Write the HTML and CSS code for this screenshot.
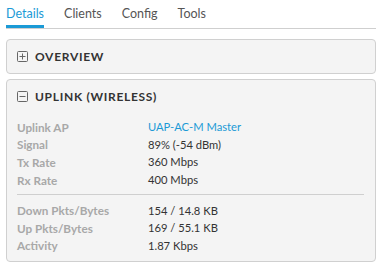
FILE: index.html
```html
<!DOCTYPE html>
<html>
<head>
<meta charset="utf-8">
<link rel="stylesheet" href="styles.css">
</head>
<body>
<div class="panel">
  <nav class="tabs">
    <span class="tab active">Details</span>
    <span class="tab">Clients</span>
    <span class="tab">Config</span>
    <span class="tab">Tools</span>
  </nav>
  <section class="box">
    <div class="box-head">
      <svg class="toggle" width="11" height="11" viewBox="0 0 11 11"><rect x="0.5" y="0.5" width="10" height="10" rx="1" fill="none" stroke="#666"/><path d="M2.5 5.5h6M5.5 2.5v6" stroke="#666" stroke-width="1"/></svg>
      <span class="box-title">OVERVIEW</span>
    </div>
  </section>
  <section class="box">
    <div class="box-head">
      <svg class="toggle" width="11" height="11" viewBox="0 0 11 11"><rect x="0.5" y="0.5" width="10" height="10" rx="1" fill="none" stroke="#666"/><path d="M2.5 5.5h6" stroke="#666" stroke-width="1"/></svg>
      <span class="box-title">UPLINK (WIRELESS)</span>
    </div>
    <div class="box-body">
      <div class="row"><span class="label">Uplink AP</span><span class="value link">UAP-AC-M Master</span></div>
      <div class="row"><span class="label">Signal</span><span class="value">89% (-54 dBm)</span></div>
      <div class="row"><span class="label">Tx Rate</span><span class="value">360 Mbps</span></div>
      <div class="row"><span class="label">Rx Rate</span><span class="value">400 Mbps</span></div>
      <hr class="sep">
      <div class="row"><span class="label">Down Pkts/Bytes</span><span class="value">154 / 14.8 KB</span></div>
      <div class="row"><span class="label">Up Pkts/Bytes</span><span class="value">169 / 55.1 KB</span></div>
      <div class="row"><span class="label">Activity</span><span class="value">1.87 Kbps</span></div>
    </div>
  </section>
</div>
</body>
</html>
```
FILE: styles.css
```css
html, body {
  margin: 0;
  padding: 0;
  background: #fff;
}
body {
  font-family: Lato, "Liberation Sans", sans-serif;
  color: #333;
}
.panel {
  width: 370px;
  margin-left: 6px;
}
.tabs {
  display: flex;
  gap: 20px;
  padding-top: 5px;
  border-bottom: 1px solid #cfcfcf;
}
.tab {
  font-size: 12.5px;
  line-height: 18px;
  color: #555;
  padding-bottom: 2px;
  border-bottom: 3px solid transparent;
}
.tab.active {
  color: #1b9ad6;
  border-bottom-color: #1b9ad6;
}
.box {
  background: #f4f4f4;
  border: 1px solid #d0d0d0;
  border-radius: 4px;
  margin-top: 10px;
}
.box + .box {
  margin-top: 5px;
}
.box-head {
  display: flex;
  align-items: center;
  gap: 7px;
  padding: 8px 10px;
  height: 17px;
}
.toggle {
  display: block;
  flex: none;
}
.box-title {
  font-size: 12px;
  font-weight: 700;
  letter-spacing: 0.7px;
  line-height: 17px;
  color: #333;
}
.box-body {
  padding: 5px 10px 7px 10px;
}
.row {
  display: flex;
  height: 17.6px;
  align-items: center;
}
.label {
  width: 131px;
  flex: none;
  font-size: 11.7px;
  font-weight: 700;
  color: #a8a8a8;
}
.value {
  font-size: 11.2px;
  color: #333;
}
.value.link {
  color: #1b9ad6;
}
.sep {
  border: 0;
  border-top: 1px solid #cfcfcf;
  margin: 6px 1px 6px 0;
}
```
